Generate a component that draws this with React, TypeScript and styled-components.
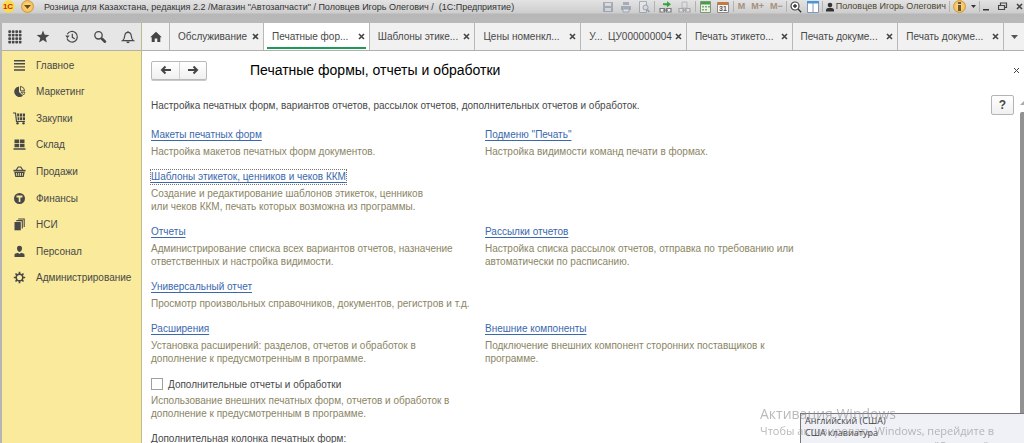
import React from 'react';
import styled, { createGlobalStyle, css } from 'styled-components';

const GlobalStyle = createGlobalStyle`
  * { box-sizing: border-box; }
  body {
    margin: 0;
    background: #fff;
    color: #484848;
    font: 10px/13px "Liberation Sans", Arial, sans-serif;
  }
  button { font: inherit; color: inherit; }
`;

const Shell = styled.div`
  display: flex;
  flex-direction: column;
  height: 100vh;
  overflow: hidden;
`;

const TitleBar = styled.header`
  flex: none;
  display: flex;
  align-items: flex-start;
  justify-content: space-between;
  height: 23px;
  padding: 0 1px 0 2px;
  background: linear-gradient(#e3e3e3 0, #cdcdcd 13px, #b7b7b7 14px, #b9b9b9 100%);
  color: #333;
`;

const BarGroup = styled.div<{ $gap: number }>`
  display: flex;
  align-items: center;
  gap: ${p => p.$gap}px;
  height: 13px;
  white-space: nowrap;
`;

const AppTitle = styled.h1`
  margin: 0 0 0 4px;
  font-size: 9px;
  line-height: 12px;
  font-weight: normal;
`;

const BarButton = styled.button<{ $faded?: boolean }>`
  display: flex;
  align-items: center;
  justify-content: center;
  height: 13px;
  padding: 0;
  border: 0;
  background: none;
  opacity: ${p => (p.$faded ? 0.5 : 1)};
`;

const MemoryButton = styled(BarButton)`
  color: #a4917f;
  font-size: 9px;
  font-weight: bold;
`;

const RoundButton = styled(BarButton)`
  width: 13px;
  border-radius: 50%;
  border: 1px solid #cf9a3c;
  background: radial-gradient(#ffe08a, #efb04a);
`;

const Divider = styled.span`
  width: 1px;
  height: 11px;
  margin: 0 -2px;
  background: #b2b2b2;
`;

const UserName = styled.span`
  color: #4f4430;
  font-size: 9px;
`;

const Body = styled.div`
  flex: 1;
  min-height: 0;
  display: flex;
  border-left: 2px solid #b5b5b5;
`;

const Side = styled.aside`
  flex: none;
  width: 140px;
  display: flex;
  flex-direction: column;
  border-right: 1px solid #c0b98c;
  background: #f9ea9c;
`;

const Tools = styled.div`
  display: flex;
  align-items: center;
  justify-content: space-between;
  height: 28px;
  padding: 0 6px;
  border-bottom: 1px solid #b0b0b0;
  background: #e6e6e6;
`;

const ToolButton = styled.button`
  display: flex;
  padding: 0;
  border: 0;
  background: none;
  color: #484848;
`;

const Sections = styled.nav`
  display: flex;
  flex-direction: column;
  height: 240px;
  padding-top: 1px;
`;

const SectionLink = styled.a`
  flex: 1;
  display: flex;
  align-items: center;
  gap: 10px;
  padding-left: 11px;
  color: #484848;
  text-decoration: none;
  white-space: nowrap;
`;

const Main = styled.main`
  flex: 1;
  min-width: 0;
  display: flex;
  flex-direction: column;
`;

const Tabs = styled.div`
  flex: none;
  display: flex;
  height: 28px;
  border-bottom: 1px solid #b0b0b0;
  background: #f1f1f1;
`;

const tabBox = css`
  display: flex;
  align-items: center;
  border-right: 1px solid #b8b8b8;
`;

const IconTab = styled.button<{ $last?: boolean }>`
  ${tabBox}
  flex: none;
  justify-content: center;
  width: ${p => (p.$last ? 20 : 28)}px;
  padding: 0;
  border-width: 0 ${p => (p.$last ? 0 : 1)}px 0 0;
  background: none;
`;

const Tab = styled.div<{ $active?: boolean; $short?: boolean }>`
  ${tabBox}
  flex: ${p => (p.$short ? '0 0 94px' : '1 1 0')};
  min-width: 0;
  justify-content: space-between;
  padding: 0 4px 0 8px;
  background: ${p => (p.$active ? '#fff' : 'none')};
  box-shadow: ${p => (p.$active ? 'inset 0 -1px #fff, inset 3px 0 #fff, inset -3px 0 #fff, inset 0 -3px #1c9a56' : 'none')};
`;

const TabLabel = styled.button`
  padding: 0;
  border: 0;
  background: none;
  white-space: pre;
`;

const CloseButton = styled.button`
  display: flex;
  padding: 0;
  border: 0;
  background: none;
`;

const Page = styled.section`
  flex: 1;
  min-height: 0;
  display: flex;
  flex-direction: column;
  overflow: hidden;
  padding: 9px 0 0 9px;
`;

const Head = styled.div`
  flex: none;
  display: flex;
  align-items: center;
  height: 20px;
  padding-right: 4px;
`;

const NavButtons = styled.div`
  display: flex;
  height: 19px;
  border: 1px solid #b9b9b9;
  border-radius: 2px;
  background: linear-gradient(#fff, #f0f0f0);
  box-shadow: 0 1px #c9c9c9;
`;

const NavButton = styled.button`
  display: flex;
  align-items: center;
  justify-content: center;
  width: 27px;
  padding: 0;
  border: 0;
  background: none;

  & + & { border-left: 1px solid #cfcfcf; }
`;

const PageTitle = styled.h2`
  flex: 1;
  margin: 0 0 0 43px;
  color: #000;
  font-size: 14px;
  line-height: 20px;
  font-weight: normal;
`;

const Intro = styled.div`
  flex: none;
  display: flex;
  justify-content: space-between;
  align-items: center;
  margin-top: 15px;
  padding-right: 10px;
`;

const Text = styled.p`
  margin: 0;
`;

const HelpButton = styled.button`
  width: 23px;
  height: 20px;
  padding: 0;
  border: 1px solid #b4b4b4;
  border-radius: 2px;
  background: linear-gradient(#fff, #f0f0f0);
  font-size: 12px;
  font-weight: bold;
`;

const Grid = styled.div`
  display: grid;
  grid-template-columns: minmax(0, 334px) minmax(0, 334px);
  row-gap: 12px;
  margin-top: 13px;
`;

const Item = styled.div<{ $column: number }>`
  grid-column: ${p => p.$column};
  display: flex;
  flex-direction: column;
  align-items: flex-start;
  gap: 3px;
`;

const ItemLink = styled.a<{ $focused?: boolean }>`
  color: #3a68ad;
  line-height: 14px;
  text-decoration: underline;
  text-decoration-skip-ink: none;
  text-underline-offset: 2px;
  outline: ${p => (p.$focused ? '1px dotted #777' : 'none')};
`;

const Hint = styled.p`
  margin: 0;
  color: #8b8564;
  white-space: pre;
`;

const CheckLabel = styled.label`
  display: flex;
  align-items: center;
  gap: 5px;
  height: 14px;
`;

const Check = styled.input`
  appearance: none;
  width: 12px;
  height: 12px;
  margin: 0;
  border: 1px solid #a0a0a0;
  background: #fff;
`;

const ScrollTrack = styled.div`
  position: absolute;
  top: 101px;
  right: 0;
  bottom: 28px;
  width: 4px;
  display: flex;
  flex-direction: column;
  gap: 7px;
`;

const ScrollThumb = styled.div`
  flex: 1;
  border-radius: 2px 0 0 0;
  background: #929292;
`;

const Toast = styled.div`
  position: fixed;
  left: 800px;
  right: 0;
  bottom: 0;
  height: 30px;
  padding: 1px 4px;
  border: 1px solid #777;
  border-width: 1px 0 0 1px;
  background: #f0f1f7;
  color: #444;
  font: 9px/12px "Open Sans", "Noto Sans", sans-serif;
`;

const Watermark = styled.div`
  position: fixed;
  left: 760px;
  bottom: -10px;
  color: rgba(140, 140, 140, 0.6);
  font: 11px/16px "Open Sans", "Noto Sans", sans-serif;
  white-space: nowrap;
  pointer-events: none;
`;

const WatermarkTitle = styled.div`
  font-size: 14px;
  line-height: 18px;
`;

const WatermarkTail = styled.div`
  padding-right: 6px;
  line-height: 14px;
  text-align: right;
`;

const Svg = ({ w, h = w, children }: { w: number; h?: number; children: React.ReactNode }) => (
  <svg width={w} height={h} viewBox={`0 0 ${w} ${h}`} fill="currentColor" aria-hidden="true">
    {children}
  </svg>
);

const Cross = ({ thin }: { thin?: boolean }) => (
  <Svg w={7}>
    <path d="M1 1l5 5M6 1L1 6" stroke="#444" strokeWidth={thin ? 1 : 1.6} fill="none" />
  </Svg>
);

const Arrow = ({ right }: { right?: boolean }) => (
  <Svg w={12} h={10}>
    <path
      d={right ? 'M1 5h9M6.500 1.500L10 5l-3.500 3.500' : 'M11 5H2M5.500 1.500L2 5l3.500 3.500'}
      fill="none"
      stroke="#444"
      strokeWidth="2"
    />
  </Svg>
);

const tools = [
  {
    name: 'Меню',
    icon: (
      <Svg w={14}>
        {[0, 1, 2, 3].map(r =>
          [0, 1, 2, 3].map(c => <rect key={`${r}${c}`} x={c * 3.5 + 0.3} y={r * 3.5 + 0.3} width="2.700" height="2.700" rx="0.800" />),
        )}
      </Svg>
    ),
  },
  {
    name: 'Избранное',
    icon: <Svg w={14}><path d="M7 .5l1.700 4.300 4.600.3-3.600 2.900 1.200 4.600L7 10.100l-3.900 2.500 1.200-4.600L.7 5.100l4.600-.3z" /></Svg>,
  },
  {
    name: 'История',
    icon: (
      <Svg w={14}>
        <g fill="none" stroke="currentColor" strokeWidth="1.200">
          <path d="M2.300 4.300A5.300 5.300 0 1 1 2 8.500M7.300 3.800v3.500l2.400 1.500" />
        </g>
        <path d="M.3 5.500h4.400L2.400 8.200z" />
      </Svg>
    ),
  },
  {
    name: 'Поиск',
    icon: (
      <Svg w={14}>
        <g fill="none" stroke="currentColor">
          <circle cx="5.500" cy="5.300" r="3.700" strokeWidth="1.300" />
          <path d="M8.300 8.100l1 1" strokeWidth="1.300" />
          <path d="M9 8.800l3 2.900" strokeWidth="2.600" strokeLinecap="round" />
        </g>
      </Svg>
    ),
  },
  {
    name: 'Уведомления',
    icon: (
      <Svg w={14}>
        <path d="M1.500 10.700c1.600-1.200 2-2.500 2.200-4.700.2-2.400 1.300-3.700 3.300-3.700s3.100 1.300 3.300 3.700c.2 2.200.6 3.500 2.200 4.700zM7 2.200V1" fill="none" stroke="currentColor" strokeWidth="1.200" />
        <path d="M5.300 11.500h3.400a1.700 1.700 0 0 1-3.400 0z" />
      </Svg>
    ),
  },
];

const sections = [
  { name: 'Главное', icon: <path d="M1 1h11v1.400H1zM1 4.100h11v1.400H1zM1 7.200h11v1.400H1zM1 10.300h11v1.400H1z" /> },
  {
    name: 'Маркетинг',
    icon: (
      <>
        <path d="M6 1.500V7l4 3.800A5.300 5.300 0 1 1 6 1.500z" />
        <path d="M7.500 1.300a5 5 0 0 1 4.200 4.500H7.500zM8 7.200h3.800a4.500 4.500 0 0 1-1.200 2.700z" fill="none" stroke="currentColor" strokeWidth=".9" />
      </>
    ),
  },
  {
    name: 'Закупки',
    icon: (
      <>
        <path d="M0 1h2.500l1 8.500H12" fill="none" stroke="currentColor" strokeWidth="1.200" />
        <path d="M4 1.500h2.300v3H4.300zM7 1.500h2.300v3H7zM10 1.500h2v3h-2zM4.500 5.200h1.800v3H4.700zM7 5.200h2.300v3H7zM10 5.200h2v3h-2z" />
        <circle cx="4.500" cy="11.300" r="1.200" />
        <circle cx="10.500" cy="11.300" r="1.200" />
      </>
    ),
  },
  { name: 'Склад', icon: <path d="M1.500 1.500h4.600v3.700H1.500zM6.900 1.500h4.600v3.700H6.900zM1.500 6h4.600v3.300H1.500zM6.900 6h4.600v3.300H6.900zM.5 10.300h12v1.500H.5z" /> },
  {
    name: 'Продажи',
    icon: (
      <>
        <path d="M3 5.500L5.200 2h2.600L10 5.500" fill="none" stroke="currentColor" strokeWidth="1.200" />
        <path d="M.5 4.800h12v1.700H.5z" />
        <path fillRule="evenodd" d="M1.300 7h10.400l-1 5H2.300zM3 8l.5 3h.8L4 8zM5.200 8l.2 3h.8V8zM7 8v3h.7L8 8zM9.200 8l-.4 3h.7l.6-3z" />
      </>
    ),
  },
  { name: 'Финансы', icon: <path fillRule="evenodd" d="M6.500 1a5.500 5.500 0 1 1 0 11 5.500 5.500 0 0 1 0-11zM3.500 3.500v2H5.700V10h1.700V5.500h2.100v-2z" /> },
  {
    name: 'НСИ',
    icon: (
      <>
        <path d="M1.500 4h6.300v8.300H1.500z" />
        <path d="M3.300 2.600h6v8M5.200 1h6v8" fill="none" stroke="currentColor" strokeWidth="1.100" />
      </>
    ),
  },
  {
    name: 'Персонал',
    icon: (
      <>
        <path d="M6.500.8c1.800 0 2.600 1.100 2.500 2.800-.1 1.700-1 3.400-2.500 3.400S4.100 5.300 4 3.600C3.900 1.900 4.700.8 6.500.8z" />
        <path d="M1.500 12V9.700c0-1 1.500-1.500 3.400-2l1.600 1.200 1.600-1.200c1.900.5 3.400 1 3.400 2V12z" />
      </>
    ),
  },
  {
    name: 'Администрирование',
    icon: (
      <>
        <circle cx="6.500" cy="6.500" r="3.300" fill="none" stroke="currentColor" strokeWidth="1.500" />
        <path d="M6.500 3V.8M6.500 10v2.200M3 6.500H.8M10 6.500h2.200M4 4L2.500 2.500M9 9l1.500 1.500M4 9l-1.500 1.500M9 4l1.500-1.500" stroke="currentColor" strokeWidth="1.700" />
      </>
    ),
  },
];

const tabs = [
  { label: 'Обслуживание', short: true },
  { label: 'Печатные фор...', active: true },
  { label: 'Шаблоны этике...' },
  { label: 'Цены номенкл...' },
  { label: 'У...  ЦУ000000004' },
  { label: 'Печать этикето...' },
  { label: 'Печать докуме...' },
  { label: 'Печать докуме...' },
];

const items = [
  { column: 1, title: 'Макеты печатных форм', hint: 'Настройка макетов печатных форм документов.' },
  { column: 2, title: 'Подменю "Печать"', hint: 'Настройка видимости команд печати в формах.' },
  {
    column: 1,
    title: 'Шаблоны этикеток, ценников и чеков ККМ',
    hint: 'Создание и редактирование шаблонов этикеток, ценников\nили чеков ККМ, печать которых возможна из программы.',
    focused: true,
  },
  { column: 1, title: 'Отчеты', hint: 'Администрирование списка всех вариантов отчетов, назначение\nответственных и настройка видимости.' },
  { column: 2, title: 'Рассылки отчетов', hint: 'Настройка списка рассылок отчетов, отправка по требованию или\nавтоматически по расписанию.' },
  { column: 1, title: 'Универсальный отчет', hint: 'Просмотр произвольных справочников, документов, регистров и т.д.' },
  { column: 1, title: 'Расширения', hint: 'Установка расширений: разделов, отчетов и обработок в\nдополнение к предусмотренным в программе.' },
  { column: 2, title: 'Внешние компоненты', hint: 'Подключение внешних компонент сторонних поставщиков к\nпрограмме.' },
];

const SaveIcon = (
  <Svg w={12}><path fillRule="evenodd" d="M1 1h10v10H1zM3 2v3h6V2zM3 7v3h6V7z" fill="#6d7f96" /></Svg>
);
const PrintIcon = (
  <Svg w={12}><path d="M3 1h6v3H3zM1 5h10v4H1z" fill="#6d7f96" /><path d="M3 8h6v3H3z" fill="#eee" stroke="#6d7f96" /></Svg>
);
const PreviewIcon = (
  <Svg w={12}>
    <path d="M1.500.5h7v11h-7z" fill="#eee" stroke="#6d7f96" />
    <circle cx="7.500" cy="6.500" r="2.500" fill="#cfdcec" stroke="#5a6c84" />
    <path d="M9.300 8.500l2 2.500" stroke="#5a6c84" strokeWidth="1.500" />
  </Svg>
);
const LinkIcon = ({ green }: { green?: boolean }) => (
  <Svg w={13} h={12}>
    {green ? (
      <path d="M4 4V2.200h4V.3l4 3-4 3V4.500z" fill="#2fa63a" />
    ) : (
      <path d="M4 1h5v6H4z" fill="#ddd" stroke="#8b96a5" />
    )}
    <path d="M1 7.500h4.500v3.500H1zM7.500 7.500H12v3.500H7.500zM4 9.200h5" fill="#eee" stroke="#7b7b7b" strokeWidth="1.200" />
  </Svg>
);
const CalcIcon = (
  <Svg w={11} h={12}>
    <path d="M.5.5h10v11H.5z" fill="#e9f3e4" stroke="#7a9a72" />
    <path d="M1 1h9v2.500H1z" fill="#3fa24a" />
    <path d="M2 5h2v1.500H2zM5 5h2v1.500H5zM8 5h2v1.500H8zM2 8h2v1.500H2zM5 8h2v1.500H5z" fill="#8ba585" />
  </Svg>
);
const CalendarIcon = (
  <Svg w={12}>
    <path d="M.5 1.500h11v10H.5z" fill="#f7f7f7" stroke="#8b8b8b" />
    <path d="M1 1h10v3H1z" fill="#c9783c" />
    <text x="6" y="10" fontSize="7" fontWeight="bold" textAnchor="middle" fill="#555">31</text>
  </Svg>
);
const ZoomIcon = (
  <Svg w={12}>
    <circle cx="5" cy="5" r="4" fill="#fff" stroke="#444" strokeWidth="1.200" />
    <path d="M5 3v4M3 5h4M8 8l3.200 3.200" stroke="#333" strokeWidth="1.400" />
  </Svg>
);
const PanelsIcon = (
  <Svg w={12}>
    <path d="M.5.5h11v11H.5z" fill="#fff" stroke="#7d99b8" />
    <path d="M0 0h12v2.500H0z" fill="#4a96dd" />
    <path d="M6 2v9" stroke="#7d99b8" />
  </Svg>
);
const UserIcon = (
  <Svg w={8} h={10}><circle cx="4" cy="3" r="2.300" /><path d="M0 9.500V8c0-1.500 2-2.200 4-2.200S8 6.500 8 8v1.500z" /></Svg>
);

export default function App() {
  return (
    <Shell>
      <GlobalStyle />
      <TitleBar>
        <BarGroup $gap={6}>
          <Svg w={13}>
            <circle cx="6.500" cy="6.500" r="6.200" fill="#f8dc4a" />
            <text x="6" y="9" fontSize="8" fontWeight="bold" textAnchor="middle" fill="#d0281c">1С</text>
          </Svg>
          <RoundButton aria-label="Главное меню">
            <Svg w={7} h={4}><path d="M0 0h7L3.500 4z" fill="#6b4a18" /></Svg>
          </RoundButton>
          <AppTitle>Розница для Казахстана, редакция 2.2 /Магазин "Автозапчасти" / Половцев Игорь Олегович /&nbsp; (1С:Предприятие)</AppTitle>
        </BarGroup>
        <BarGroup $gap={5}>
          <BarGroup $gap={6}>
            <BarButton $faded aria-label="Сохранить">{SaveIcon}</BarButton>
            <BarButton $faded aria-label="Печать">{PrintIcon}</BarButton>
            <BarButton $faded aria-label="Просмотр">{PreviewIcon}</BarButton>
            <Divider />
            <BarButton aria-label="Получить ссылку"><LinkIcon green /></BarButton>
            <BarButton $faded aria-label="Перейти по ссылке"><LinkIcon /></BarButton>
            <Divider />
            <BarButton aria-label="Калькулятор">{CalcIcon}</BarButton>
            <BarButton aria-label="Календарь">{CalendarIcon}</BarButton>
            <Divider />
            <MemoryButton>M</MemoryButton>
            <MemoryButton>M+</MemoryButton>
            <MemoryButton>M−</MemoryButton>
          </BarGroup>
          <Divider />
          <BarButton aria-label="Масштаб">{ZoomIcon}</BarButton>
          <BarButton aria-label="Панели">{PanelsIcon}</BarButton>
          <Divider />
          <BarGroup $gap={2}>
            {UserIcon}
            <UserName>Половцев Игорь Олегович</UserName>
          </BarGroup>
          <Divider />
          <RoundButton aria-label="Информация">
            <Svg w={3} h={9}><path d="M0 0h3v2H0zM0 3h3v6H0z" fill="#6b5a3a" /></Svg>
          </RoundButton>
          <Svg w={5} h={3}><path d="M0 0h5L2.500 3z" /></Svg>
          <Divider />
          <BarGroup $gap={8}>
            <BarButton aria-label="Свернуть"><Svg w={7} h={9}><path d="M0 7h6v1.500H0z" /></Svg></BarButton>
            <BarButton aria-label="Восстановить">
              <Svg w={10} h={9}><path d="M2.500 3V1h6v4.500H7M.5 3.500h6v4h-6z" fill="none" stroke="#444" strokeWidth="1.200" /></Svg>
            </BarButton>
            <BarButton aria-label="Закрыть"><Cross /></BarButton>
          </BarGroup>
        </BarGroup>
      </TitleBar>

      <Body>
        <Side>
          <Tools>
            {tools.map(t => <ToolButton key={t.name} aria-label={t.name}>{t.icon}</ToolButton>)}
          </Tools>
          <Sections>
            {sections.map(s => (
              <SectionLink key={s.name} href="#">
                <Svg w={13}>{s.icon}</Svg>
                {s.name}
              </SectionLink>
            ))}
          </Sections>
        </Side>

        <Main>
          <Tabs>
            <IconTab aria-label="Начальная страница">
              <Svg w={12}><path d="M6 .8l5.800 5.500H10.300V11H7.300V7.500H4.700V11h-3V6.300H.2z" fill="#444" /></Svg>
            </IconTab>
            {tabs.map((t, i) => (
              <Tab key={i} $active={t.active} $short={t.short}>
                <TabLabel>{t.label}</TabLabel>
                <CloseButton aria-label="Закрыть вкладку"><Cross /></CloseButton>
              </Tab>
            ))}
            <IconTab $last aria-label="Все вкладки">
              <Svg w={7} h={4}><path d="M0 0h7L3.500 4z" fill="#555" /></Svg>
            </IconTab>
          </Tabs>

          <Page>
            <Head>
              <NavButtons>
                <NavButton aria-label="Назад"><Arrow /></NavButton>
                <NavButton aria-label="Вперед"><Arrow right /></NavButton>
              </NavButtons>
              <PageTitle>Печатные формы, отчеты и обработки</PageTitle>
              <CloseButton aria-label="Закрыть"><Cross thin /></CloseButton>
            </Head>
            <Intro>
              <Text>Настройка печатных форм, вариантов отчетов, рассылок отчетов, дополнительных отчетов и обработок.</Text>
              <HelpButton aria-label="Справка">?</HelpButton>
            </Intro>
            <Grid>
              {items.map(it => (
                <Item key={it.title} $column={it.column}>
                  <ItemLink href="#" $focused={it.focused}>{it.title}</ItemLink>
                  <Hint>{it.hint}</Hint>
                </Item>
              ))}
              <Item $column={1}>
                <CheckLabel>
                  <Check type="checkbox" />
                  Дополнительные отчеты и обработки
                </CheckLabel>
                <Hint>{'Использование внешних печатных форм, отчетов и обработок в\nдополнение к предусмотренным в программе.'}</Hint>
              </Item>
              <Item $column={1}>
                <Text>Дополнительная колонка печатных форм:</Text>
              </Item>
            </Grid>
          </Page>
        </Main>
      </Body>

      <ScrollTrack>
        <Svg w={4} h={4}><path d="M0 4l4-4v4z" fill="#aaa" /></Svg>
        <ScrollThumb />
      </ScrollTrack>
      <Toast role="status">
        <div>Английский (США)</div>
        <div>США клавиатура</div>
      </Toast>
      <Watermark>
        <WatermarkTitle>Активация Windows</WatermarkTitle>
        <div>Чтобы активировать Windows, перейдите в</div>
        <WatermarkTail>"Система"</WatermarkTail>
      </Watermark>
    </Shell>
  );
}
